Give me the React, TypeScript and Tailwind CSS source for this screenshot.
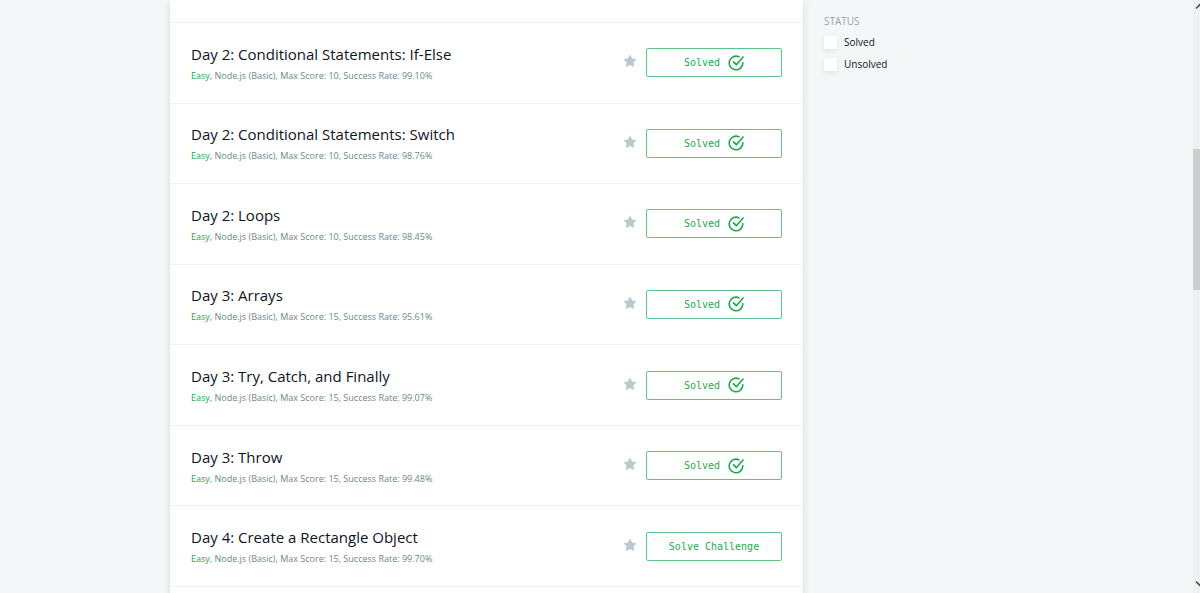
import { useState } from 'react';

type Challenge = {
  name: string;
  score: number;
  rate: string;
  solved: boolean;
};

const challenges: Challenge[] = [
  { name: 'Day 2: Conditional Statements: If-Else', score: 10, rate: '99.10%', solved: true },
  { name: 'Day 2: Conditional Statements: Switch', score: 10, rate: '98.76%', solved: true },
  { name: 'Day 2: Loops', score: 10, rate: '98.45%', solved: true },
  { name: 'Day 3: Arrays', score: 15, rate: '95.61%', solved: true },
  { name: 'Day 3: Try, Catch, and Finally', score: 15, rate: '99.07%', solved: true },
  { name: 'Day 3: Throw', score: 15, rate: '99.48%', solved: true },
  { name: 'Day 4: Create a Rectangle Object', score: 15, rate: '99.70%', solved: false },
];

function StarIcon() {
  return (
    <svg viewBox="0 0 24 24" className="size-3.5" fill="currentColor" aria-hidden="true">
      <path
        d="M12 2l3.1 6.5 7 .9-5.1 4.9 1.3 7.1L12 18l-6.3 3.4L7 14.3 1.9 9.4l7-.9z"
        stroke="currentColor"
        strokeWidth="1.6"
        strokeLinejoin="round"
      />
    </svg>
  );
}

function CheckIcon() {
  return (
    <svg
      viewBox="0 0 24 24"
      className="size-4"
      fill="none"
      stroke="currentColor"
      strokeWidth="2.4"
      strokeLinecap="round"
      strokeLinejoin="round"
      aria-hidden="true"
    >
      <path d="M16.5 2.8A10.2 10.2 0 1 0 22.2 11.8" />
      <path d="M8.3 10.3l4.2 4.2L22.6 3" />
    </svg>
  );
}

function ChallengeRow({ challenge }: { challenge: Challenge }) {
  return (
    <li className="flex items-center border-t border-[#eff1f1] px-[21px] py-4">
      <div className="min-w-0 flex-1">
        <h4 className="text-[15px] leading-[22px] text-[#0e141e]">{challenge.name}</h4>
        <p className="mt-1 text-[9px] leading-[14px] text-[#6b878b]">
          <span className="text-[#1ba94c]">Easy,</span> Node.js (Basic), Max Score: {challenge.score}, Success Rate:{' '}
          {challenge.rate}
        </p>
      </div>
      <button type="button" aria-label="Bookmark challenge" className="mr-[9px] mb-[3px] text-[#b7c9cc]">
        <StarIcon />
      </button>
      <button
        type="button"
        className="flex h-[29px] w-[136px] items-center justify-center gap-2 rounded-[2px] border border-[#5fc583] font-['DejaVu_Sans_Mono',monospace] text-[10px] text-[#1ba94c]"
      >
        {challenge.solved ? 'Solved' : 'Solve Challenge'}
        {challenge.solved && <CheckIcon />}
      </button>
    </li>
  );
}

function Filter({ label }: { label: string }) {
  const [checked, setChecked] = useState(false);

  return (
    <label className="flex items-center gap-[7px] text-[10px] leading-[14px] text-[#0e141e]">
      <input
        type="checkbox"
        checked={checked}
        onChange={(e) => setChecked(e.target.checked)}
        className="size-[13px] appearance-none bg-white shadow-[0_2px_5px_rgba(0,0,0,0.08)] checked:bg-[#1ba94c]"
      />
      {label}
    </label>
  );
}

function ScrollRail() {
  return (
    <div className="flex w-[7px] shrink-0 flex-col justify-between overflow-hidden bg-[#f0f0f0]" aria-hidden="true">
      <svg viewBox="0 0 7 12" className="h-3 w-[7px]" fill="none" stroke="#505050" strokeWidth="1.6">
        <path d="M3 8.5L8 3.5" />
      </svg>
      <div className="mt-[137px] mb-auto h-[141px] bg-[#cdcdcd]" />
      <svg viewBox="0 0 7 12" className="mb-1 h-3 w-[7px]" fill="none" stroke="#505050" strokeWidth="1.6">
        <path d="M3 4.5L8 9.5" />
      </svg>
    </div>
  );
}

export default function App() {
  return (
    <div className="flex h-screen overflow-hidden bg-[#f3f7f7] font-['Open_Sans',sans-serif]">
      <div className="min-w-0 flex-1">
        <div className="mx-auto flex max-w-[853px] gap-[21px]">
          <main className="min-w-0 flex-1 bg-white pt-[22px] shadow-[0_2px_8px_rgba(0,0,0,0.12)]">
            <ul className="grid min-h-[565px] auto-rows-fr border-b border-[#eff1f1]">
              {challenges.map((c) => (
                <ChallengeRow key={c.name} challenge={c} />
              ))}
            </ul>
            <div className="h-20" />
          </main>
          <aside className="w-[199px] shrink-0 pt-3.5">
            <fieldset>
              <legend className="text-[10px] leading-[14px] text-[#9a9fb0]">STATUS</legend>
              <div className="mt-[7px] flex flex-col gap-2">
                <Filter label="Solved" />
                <Filter label="Unsolved" />
              </div>
            </fieldset>
          </aside>
        </div>
      </div>
      <ScrollRail />
    </div>
  );
}
